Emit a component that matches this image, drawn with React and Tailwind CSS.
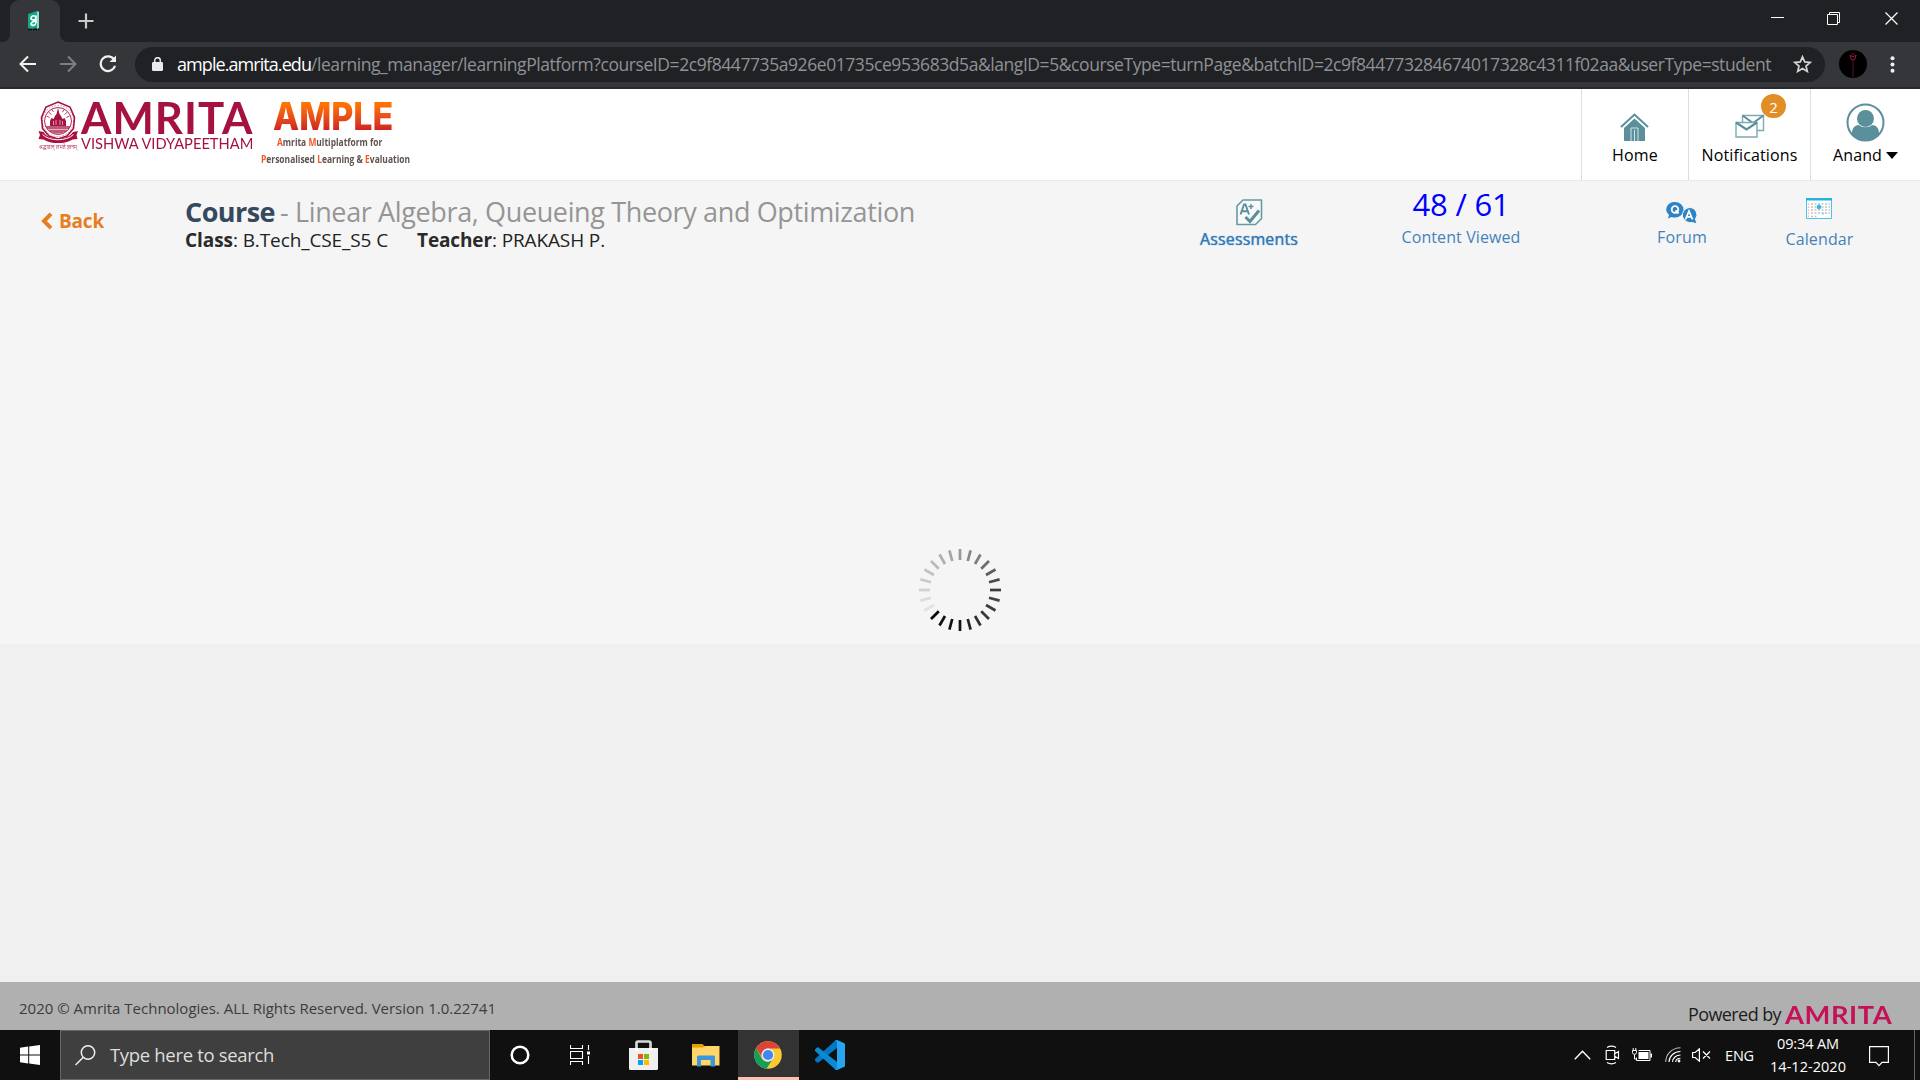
import React, { useLayoutEffect, useRef, useState } from "react";

// Single-line label whose letter spacing is computed so that it spans `w` pixels.
function Fit({ w, className = "", children }) {
  const ref = useRef(null);
  const [spacing, setSpacing] = useState(0);
  useLayoutEffect(() => {
    const el = ref.current;
    const n = el.textContent.length;
    setSpacing((w - el.getBoundingClientRect().width) / n);
  }, [w]);
  return (
    <span ref={ref} className={`block w-max shrink-0 whitespace-pre ${className}`} style={{ letterSpacing: `${spacing}px` }}>
      {children}
    </span>
  );
}

// Single-line label condensed or widened horizontally so that it spans `w` pixels.
function Stretch({ w, className = "", children }) {
  const ref = useRef(null);
  const [scale, setScale] = useState(1);
  useLayoutEffect(() => {
    setScale(w / ref.current.offsetWidth);
  }, [w]);
  return (
    <span ref={ref} className={`block w-max shrink-0 origin-left whitespace-pre ${className}`} style={{ transform: `scaleX(${scale})` }}>
      {children}
    </span>
  );
}

function TabStrip() {
  return (
    <div className="flex h-[42px] items-start bg-[#202124]">
      <div className="ml-[2px] flex h-[42px] items-end">
        <svg width="8" height="8" viewBox="0 0 8 8"><path d="M8 0v8H0a8 8 0 0 0 8-8z" fill="#35363a" /></svg>
      </div>
      <div className="flex h-[42px] w-[50px] items-center justify-center rounded-t-[9px] bg-[#35363a]">
        <svg className="-mt-px -ml-[2px]" width="14" height="20" viewBox="0 0 14 20">
          <path d="M1 3l9-3 2 1v16l-9 1-2-1z" fill="#10a98a" />
          <path d="M10 0l2 1v16l-2 1z" fill="#8fdccb" />
          <path d="M8.500 5.500c-2-1.500-4.500-.5-4.500 1.700 0 2 3 2.300 4.500.8M9 4.500v7c-.5 3.500-4 3.500-5 1.500 0-2 3-2.500 5-3.500" fill="none" stroke="#fff" strokeWidth="1.700" />
          <path d="M1 18.500h11" stroke="#111" strokeWidth="1.500" strokeDasharray="4 1" />
        </svg>
      </div>
      <svg width="8" height="42" viewBox="0 0 8 42"><path d="M0 34v8h8a8 8 0 0 1-8-8z" fill="#35363a" /></svg>
      <svg className="mt-[13px] ml-[10px]" width="16" height="16" viewBox="0 0 16 16"><path d="M8 .5v15M.5 8h15" stroke="#c9cacc" strokeWidth="2.200" /></svg>
      <svg className="mt-[11px] ml-auto" width="14" height="14" viewBox="0 0 14 14"><path d="M0 6.500h13" stroke="#fff" strokeWidth="1" /></svg>
      <svg className="mt-[11px] ml-[42px]" width="15" height="15" viewBox="0 0 15 15"><path d="M.5 3.500h10v10H.5zM2.500 3V1.500h10v10H11" fill="none" stroke="#fff" strokeWidth="1" /></svg>
      <svg className="mt-[12px] mr-[21px] ml-[43px]" width="14" height="14" viewBox="0 0 14 14"><path d="M.5.5l12 12M12.500.5l-12 12" stroke="#fff" strokeWidth="1.200" /></svg>
    </div>
  );
}

function Toolbar() {
  return (
    <div className="flex h-[47px] items-center border-b-2 border-[#28292c] bg-[#35363a] pb-px">
      <svg className="ml-[19px]" width="18" height="18" viewBox="0 0 18 18"><path d="M17 9H2M9 1.500L1.500 9 9 16.500" fill="none" stroke="#f1f1f2" strokeWidth="2" /></svg>
      <svg className="ml-[22px]" width="18" height="18" viewBox="0 0 18 18"><path d="M1 9h15M9 1.500L16.500 9 9 16.500" fill="none" stroke="#7d7e81" strokeWidth="2" /></svg>
      <svg className="ml-[22px]" width="18" height="18" viewBox="0 0 18 18">
        <path d="M15.300 5A7.300 7.300 0 1 0 16 10.800" fill="none" stroke="#f1f1f2" strokeWidth="2.200" />
        <path d="M17 .5v6.500h-6.500z" fill="#f1f1f2" />
      </svg>
      <div className="ml-[18px] flex h-[35px] w-[1690px] items-center rounded-full bg-[#202124]">
        <svg className="ml-[17px]" width="11" height="14" viewBox="0 0 11 14">
          <rect x="0" y="5" width="11" height="9" rx="1.200" fill="#e8eaed" />
          <path d="M2.700 6V3.500a2.800 2.800 0 0 1 5.600 0V6" fill="none" stroke="#e8eaed" strokeWidth="1.500" />
        </svg>
        <Fit w={134} className="ml-[14px] font-['Open_Sans',sans-serif] text-[18px] leading-[24px] text-white">ample.amrita.edu</Fit>
        <Fit w={1460} className="font-['Open_Sans',sans-serif] text-[17.5px] leading-[24px] text-[#8f9194]">
          /learning_manager/learningPlatform?courseID=2c9f8447735a926e01735ce953683d5a&amp;langID=5&amp;courseType=turnPage&amp;batchID=2c9f844773284674017328c4311f02aa&amp;userType=student
        </Fit>
        <svg className="ml-[22px]" width="19" height="18" viewBox="0 0 19 18"><path d="M9.500 1.800l2.200 5.100 5.500.5-4.200 3.600 1.300 5.400-4.800-2.900-4.800 2.900L6 11 1.800 7.400l5.500-.5z" fill="none" stroke="#d3d4d6" strokeWidth="1.700" /></svg>
      </div>
      <svg className="ml-[14px]" width="28" height="28" viewBox="0 0 28 28">
        <circle cx="14" cy="14" r="14" fill="#000" />
        <path d="M14 27V10" stroke="#3c0a24" strokeWidth="1.500" />
        <path d="M11 5l3 2 3-2M11 5l1 4 2 1 2-1 1-4M13 4h2" fill="none" stroke="#961a44" strokeWidth="1" />
      </svg>
      <svg className="ml-[23px]" width="5" height="17" viewBox="0 0 5 17"><g fill="#f1f1f2"><circle cx="2.500" cy="2.200" r="2" /><circle cx="2.500" cy="8.500" r="2" /><circle cx="2.500" cy="14.800" r="2" /></g></svg>
    </div>
  );
}

function Initial({ children }) {
  return <span className="text-[#f05a28]">{children}</span>;
}

function Emblem() {
  return (
    <svg width="42" height="43" viewBox="37 100 42 43">
      <g fill="none" stroke="#a5123f">
        <path d="M58 102l12 5 4.500 10.500-1 11-6.500 7.500-9 3-9-3-6.500-7.500-1-11 4.500-10.500z" strokeWidth="1.600" />
        <circle cx="58" cy="121" r="13.500" strokeWidth=".9" />
        <circle cx="58" cy="121" r="15.500" strokeWidth=".7" strokeDasharray="1.500 1.500" opacity=".7" />
        <path d="M46.500 116l3 1.500M48.500 112l3 2.500M51.500 109l2 3M67.500 112l-3 2.500M69.500 116l-3 1.500M64.500 109l-2 3" strokeWidth=".8" />
      </g>
      <path d="M50 126v-5l1.500-3 2 1 1.500-3 1.500-2L58 108l1.500 6 1.500 2 1.500 3 2-1 1.500 3v5z" fill="#a5123f" />
      <path d="M45.500 126h25c-2 5-7 7.500-12.500 7.500S47.500 131 45.500 126z" fill="#a5123f" opacity=".7" />
      <path d="M53.500 125v-4M56 125v-5M60 125v-5M62.500 125v-4M48 129.500h20" stroke="#f3d5dd" strokeWidth=".7" />
      <path d="M38.500 131l5 1c5 9 24 9 29.500 0l5-1-1.500 4 1 4-5 .5c-8 5-21 5-29 0l-5-.5 1.500-4z" fill="#a5123f" />
      <path d="M42.500 134.500c7 7 24 7 31 0" fill="none" stroke="#fff" strokeWidth="1" />
    </svg>
  );
}

function BrandLogo() {
  return (
    <div className="flex items-start">
      <div className="mt-[11px] ml-[37px] flex w-[43px] flex-col">
        <Emblem />
        <div className="ml-[2px] w-[38px]">
          <Stretch w={38} className="font-['Noto_Sans',sans-serif] text-[6px] leading-[8px] text-[#b5406a]">श्रद्धावान् लभते ज्ञानम्</Stretch>
        </div>
      </div>
      <div className="ml-px w-[172px] font-['Lato',sans-serif] text-[#a5123f]">
        <Stretch w={173} className="mt-[8px] text-[43px] leading-[42px] font-bold tracking-[1px]">AMRITA</Stretch>
        <Stretch w={172} className="-mt-[2px] text-[14.5px] leading-[14px]">VISHWA VIDYAPEETHAM</Stretch>
      </div>
      <div className="ml-[8px] flex w-[149px] flex-col font-['Open_Sans',sans-serif] text-[10.5px] leading-[14px] font-bold text-[#5e534e]">
        <Stretch w={120} className="mt-[7px] ml-[12px] bg-linear-to-b from-[#ff7300] from-20% to-[#cf1d20] to-85% bg-clip-text font-['Inter',sans-serif] text-[38.5px] leading-[41px] font-extrabold text-transparent">AMPLE</Stretch>
        <Stretch w={105} className="-mt-[2px] ml-[16px]"><Initial>A</Initial>mrita <Initial>M</Initial>ultiplatform for</Stretch>
        <Stretch w={149} className="mt-[3px]"><Initial>P</Initial>ersonalised <Initial>L</Initial>earning &amp; <Initial>E</Initial>valuation</Stretch>
      </div>
    </div>
  );
}

function Header() {
  return (
    <header className="flex h-[92px] items-start border-b border-[#ebebeb] bg-white font-['Open_Sans',sans-serif] text-[16px] leading-[20px] text-black">
      <BrandLogo />
      <div className="ml-auto flex h-[91px] w-[107px] flex-col items-center border-l border-[#ddd]">
        <svg className="mt-[24px] -ml-px" width="29" height="28" viewBox="0 0 29 28">
          <path d="M1 14L14.500 1.500 28 14" fill="none" stroke="#5a8f9c" strokeWidth="2" />
          <path d="M4 28V15L14.500 5.500 25 15v13z" fill="#5a8f9c" />
          <path d="M11 28V15h7v13M14.500 17v11" fill="none" stroke="#d5e4e7" strokeWidth="1" />
        </svg>
        <Fit w={46} className="mt-[4px]">Home</Fit>
      </div>
      <div className="relative flex h-[91px] w-[122px] flex-col items-center border-l border-[#ddd]">
        <svg className="mt-[25px]" width="30" height="24" viewBox="0 0 30 24">
          <g stroke="#7fa9b3" strokeWidth="1.400" fill="#fff">
            <path d="M7.500 1.500h21v15h-21z" />
            <path d="M7.500 1.500L18 9 28.500 1.500" fill="none" stroke="#5a8f9c" strokeWidth="2" />
            <path d="M1 8.500h21v14.500H1z" />
            <path d="M1 8.500l10.500 7L22 8.500" fill="none" stroke="#5a8f9c" strokeWidth="2.200" />
          </g>
        </svg>
        <Fit w={96} className="mt-[7px]">Notifications</Fit>
        <span className="absolute top-[5px] left-[72px] flex h-[24px] w-[25px] items-center justify-center rounded-full bg-[#e38d27] pt-[2px] text-[15px] text-white">2</span>
      </div>
      <div className="flex h-[91px] w-[110px] flex-col border-l border-[#ddd]">
        <svg className="mt-[14px] ml-[35px]" width="39" height="39" viewBox="0 0 39 39">
          <defs><clipPath id="face"><circle cx="19.500" cy="19.500" r="18" /></clipPath></defs>
          <circle cx="19.500" cy="19.500" r="18" fill="#fff" stroke="#5a8f9c" strokeWidth="2" />
          <g clipPath="url(#face)" fill="#5a8f9c"><path d="M6 39V30c0-5 3-8 7-8 3 3 10 3 13 0 4 0 7 3 7 8v9z" /><circle cx="19.500" cy="15.500" r="8.500" /></g>
        </svg>
        <div className="mt-[3px] ml-[22px] flex items-center">
          <Fit w={49}>Anand</Fit>
          <svg className="ml-[4px]" width="12" height="7" viewBox="0 0 12 7"><path d="M0 0h12L6 7z" /></svg>
        </div>
      </div>
    </header>
  );
}

function CourseBar() {
  return (
    <section className="flex items-start font-['Open_Sans',sans-serif] text-[16px] leading-[20px] text-[#4482bb]">
      <div className="mt-[28px] ml-[41px] flex w-[144px] items-center text-[#e67e22]">
        <svg width="12" height="18" viewBox="0 0 12 18"><path d="M10 1.800L3 9l7 7.200" fill="none" stroke="#e67e22" strokeWidth="4" /></svg>
        <Fit w={45} className="ml-[6px] text-[19px] leading-[24px] font-bold">Back</Fit>
      </div>
      <div className="mt-[15px] w-[1015px] text-[#2a2a2a]">
        <div className="flex text-[27px] leading-[32px]">
          <Fit w={90} className="font-bold text-[#34495e]">Course</Fit>
          <Fit w={635} className="ml-[5px] text-[#959595]">- Linear Algebra, Queueing Theory and Optimization</Fit>
        </div>
        <div className="flex text-[19px] leading-[24px]">
          <Fit w={48} className="font-bold">Class</Fit>
          <Fit w={155} className="text-[#222]">: B.Tech_CSE_S5 C</Fit>
          <Fit w={75} className="ml-[29px] font-bold">Teacher</Fit>
          <Fit w={113} className="text-[#222]">: PRAKASH P.</Fit>
        </div>
      </div>
      <div className="mt-[18px] flex w-[98px] flex-col items-center text-[#337ab7]">
        <svg width="27" height="27" viewBox="0 0 27 27">
          <path d="M7 1h18.500v18.500l-6 6H1V7z" fill="#f8fafa" stroke="#669aa5" strokeWidth="1.600" strokeLinejoin="round" />
          <path d="M4.500 15.500L8 5.500h1.500l3.500 10M6 12.300h5.500" fill="none" stroke="#5a8f9c" strokeWidth="1.900" />
          <path d="M12.500 7.500h5M15 5v5" stroke="#5a8f9c" strokeWidth="1.400" />
          <path d="M9.500 18l4.500 4.500 9-11" fill="none" stroke="#5a8f9c" strokeWidth="3" />
        </svg>
        <Fit w={98} className="mt-[3px] font-medium text-shadow-[0_0_1px_#337ab7]">Assessments</Fit>
      </div>
      <div className="mt-[5px] ml-[104px] flex w-[118px] flex-col items-center">
        <Fit w={97} className="text-[31px] leading-[36px] text-[#0000ff]">48 / 61</Fit>
        <Fit w={119} className="mt-[5px]">Content Viewed</Fit>
      </div>
      <div className="mt-[20px] ml-[137px] flex w-[50px] flex-col items-center">
        <svg width="32" height="24" viewBox="0 0 32 24">
          <path d="M9 1a8.300 7.500 0 0 1 0 15.500q-2 0-3.500-.5L2 17.500l1-3.500A8.300 7.500 0 0 1 9 1z" fill="#2d83c5" />
          <path d="M23 6.500a7.800 7.300 0 0 1 6.500 11.500l1.500 5-4.500-1.500a8 7.300 0 1 1-3.500-15z" fill="#2d83c5" stroke="#f5f5f5" strokeWidth="1" />
          <g fill="none" stroke="#fff" strokeWidth="1.800"><circle cx="9" cy="8.500" r="3.300" /><path d="M9.500 9.500l3 3M19.500 18.500l3.500-8.500 3.500 8.500M20.500 15.800h5" /></g>
        </svg>
        <Fit w={50} className="mt-[2px]">Forum</Fit>
      </div>
      <div className="mt-[17px] ml-[78px] flex w-[69px] flex-col items-center">
        <svg className="-ml-px" width="26" height="21" viewBox="0 0 26 21">
          <path d="M.5.5h25v20H.5z" fill="#fff" stroke="#4cc3e4" />
          <path d="M0 0h26v2.500H0z" fill="#25b4df" />
          <path d="M5 6h19M5 9h19M5 12h19M5 15h19M5 18.500h7" stroke="#c4c4c4" strokeWidth="1.500" strokeDasharray="2 1.500" />
          <path d="M2.500 5.500v14" stroke="#f2b3b3" strokeWidth="1.300" strokeDasharray="1.500 1.500" />
          <circle cx="13" cy="9" r="2.300" fill="#27bde8" />
          <circle cx="17" cy="15.500" r="1.300" fill="#9ddcf0" />
        </svg>
        <Fit w={68} className="mt-[10px]">Calendar</Fit>
      </div>
    </section>
  );
}

const TICKS = ["#999", "#888", "#7c7c7c", "#6c6c6c", "#5c5c5c", "#4c4c4c", "#3c3c3c", "#444", "#3c3c3c", "#383838", "#303030", "#222", "#111", "#111", "#111", "#0a0a0a", "#e2e2e2", "#dcdcdc", "#d2d2d2", "#cacaca", "#c2c2c2", "#bababa", "#b0b0b0", "#a4a4a4"];

function Spinner() {
  return (
    <svg className="mx-auto" width="84" height="84" viewBox="-42 -42 84 84">
      {TICKS.map((c, i) => (
        <path key={i} d="M0-41V-30" stroke={c} strokeWidth="2.700" transform={`rotate(${i * 15})`} />
      ))}
    </svg>
  );
}

function Footer() {
  return (
    <footer className="flex h-[48px] items-start bg-[#b0b0b0] font-['Open_Sans',sans-serif]">
      <Fit w={477} className="mt-[16px] ml-[19px] text-[15px] leading-[20px] text-[#3c3c3c]">2020 © Amrita Technologies. ALL Rights Reserved. Version 1.0.22741</Fit>
      <Fit w={93} className="mt-[20px] ml-auto text-[18px] leading-[24px] text-[#1c1c1c]">Powered by</Fit>
      <div className="mt-[21px] mr-[28px] ml-[4px] w-[107px]">
        <Stretch w={107} className="font-['Lato',sans-serif] text-[24.5px] leading-[24px] font-bold tracking-[.5px] text-[#c4125a]">AMRITA</Stretch>
      </div>
    </footer>
  );
}

function Taskbar() {
  return (
    <div className="flex h-[50px] items-center bg-[#101010] font-['Open_Sans',sans-serif]">
      <svg className="ml-[20px]" width="20" height="20" viewBox="0 0 20 20" fill="#fff"><path d="M0 2.800l8.200-1.200v7.900H0zM9.200 1.400L20 0v9.500H9.200zM0 10.500h8.200v7.900L0 17.200zM9.200 10.500H20V20L9.200 18.600z" /></svg>
      <div className="ml-[20px] flex h-[50px] w-[430px] items-center border border-[#666] bg-[#3f3f3f]">
        <svg className="ml-[14px]" width="21" height="21" viewBox="0 0 21 21"><circle cx="13" cy="7.500" r="6.700" fill="none" stroke="#f0f0f0" strokeWidth="1.500" /><path d="M8.300 12.300L.5 20" stroke="#f0f0f0" strokeWidth="1.500" /></svg>
        <Fit w={164} className="ml-[14px] text-[18.5px] leading-[24px] text-[#dedede]">Type here to search</Fit>
      </div>
      <svg className="ml-[20px]" width="20" height="20" viewBox="0 0 20 20"><circle cx="10" cy="10" r="8.300" fill="none" stroke="#fff" strokeWidth="2.500" /></svg>
      <svg className="ml-[40px]" width="20" height="20" viewBox="0 0 20 20"><path d="M.5 0v3.500h12V0M.5 20v-3.500h12V20M.5 6.500h12v7H.5zM18.500 0v5M18.500 11v8" fill="none" stroke="#fff" strokeWidth="1.100" /><path d="M17 6.500h3v3h-3z" fill="#fff" /></svg>
      <svg className="ml-[39px]" width="29" height="30" viewBox="0 0 29 30">
        <path d="M7.500 9V3q0-1.500 1.500-1.500h11q1.500 0 1.500 1.500v6" fill="none" stroke="#d8d8d8" strokeWidth="2.700" />
        <path d="M0 8h29v20.500q0 1.500-1.500 1.500h-26Q0 30 0 28.500z" fill="#f0f0f0" /><path d="M6 8h3v2.500H6zM20 8h3v2.500h-3z" fill="#fff" />
        <path d="M9 14h5v5H9z" fill="#f25022" /><path d="M15 14h5v5h-5z" fill="#7fba00" /><path d="M9 20h5v5H9z" fill="#00a4ef" /><path d="M15 20h5v5h-5z" fill="#ffb900" />
      </svg>
      <svg className="ml-[34px]" width="28" height="24" viewBox="0 0 28 24">
        <path d="M0 1h10.500L13 3.500V6H0z" fill="#e0a000" />
        <path d="M13 3h14.500v19.500H0V4.500h11z" fill="#ffd667" />
        <path d="M5 23.500V14q0-1.500 1.500-1.500h15q1.500 0 1.500 1.500v9.500h-4.500V17H9v6.500z" fill="#3a96dd" />
      </svg>
      <div className="ml-[18px] flex h-[50px] w-[61px] items-center border-b-[3px] border-[#fcc0b0] bg-[#333] pt-[3px] pl-[16px]">
        <svg width="28" height="28" viewBox="0 0 28 28">
          <circle cx="14" cy="14" r="13.800" fill="#fbc934" />
          <path d="M2 7a13.800 13.800 0 0 1 24 0.500H14a6.500 6.500 0 0 0-6 9z" fill="#db4437" />
          <path d="M2 7a13.800 13.800 0 0 0 10.500 20.700L19 17.500a6.500 6.500 0 0 1-11.200 0z" fill="#129f5c" />
          <circle cx="14" cy="14" r="6.400" fill="#e8f0fb" /><circle cx="14" cy="14" r="5.100" fill="#4285f4" />
        </svg>
      </div>
      <svg className="ml-[16px]" width="30" height="30" viewBox="0 0 30 30">
        <path d="M22 0v8L3.500 22.500Q2.500 23 1.500 22L0 20.500q-.5-1 .3-1.700L20 .8z" fill="#0078c4" />
        <path d="M22 30v-8L3.500 7.500Q2.500 7 1.500 8L0 9.500q-.5 1 .3 1.700L20 29.200z" fill="#0a8ad4" />
        <path d="M22 0l7 3q1 .5 1 1.500v21q0 1-1 1.500l-7 3q-1.200.2-2-.8 2 .5 2-1.700V2.500Q22 .3 20 .8q.8-1 2-.8z" fill="#27a5f0" />
      </svg>

      <svg className="ml-auto" width="17" height="10" viewBox="0 0 17 10"><path d="M.8 9.200l7.700-8 7.700 8" fill="none" stroke="#fff" strokeWidth="1.400" /></svg>
      <svg className="ml-[14px]" width="15" height="20" viewBox="0 0 15 20" fill="none" stroke="#fff" strokeWidth="1.200"><path d="M1.200 5.500h8.500v9H1.200zM9.700 8.800L13.500 6.500v7L9.700 11.200M2 2.500Q6.500-.2 11 2.500M2 17.500Q6.500 20.200 11 17.500" /></svg>
      <svg className="ml-[12px]" width="21" height="16" viewBox="0 0 21 16">
        <path d="M6.500 3.500h11.500v10H4.500v-3" fill="none" stroke="#fff" strokeWidth="1" /><path d="M6.500 5h10v7h-10z" fill="#fff" /><path d="M18.500 6.500h1.500v4h-1.500z" fill="#fff" />
        <path d="M1.200 1v2M3.800 1v2M.5 3.500h4v2q-.5 2-2 2t-2-2zM2.500 7.500v4.500h2" fill="none" stroke="#fff" strokeWidth="1" />
      </svg>
      <svg className="ml-[12px]" width="16" height="16" viewBox="0 0 16 16" fill="none" stroke="#fff" strokeWidth="1.100"><path d="M.7 15C1 7 7 1 15.500.8" opacity=".7" /><path d="M4 15c.3-6 5-10.500 11.500-10.500" /><path d="M7.500 15c.3-4 3.500-7 8-7" /><path d="M10.700 15c.2-2 2-3.700 4.800-3.700" /><circle cx="14" cy="14" r="1.400" fill="#fff" stroke="none" /></svg>
      <svg className="ml-[11px]" width="19" height="14" viewBox="0 0 19 14" fill="none" stroke="#fff" strokeWidth="1.200"><path d="M.6 4.500h2.600L7.400.8v12.400L3.200 9.500H.6zM11 3.500l7 7M18 3.500l-7 7" /></svg>
      <Fit w={29} className="mt-px ml-[14px] text-[14.5px] leading-[20px] text-white">ENG</Fit>
      <div className="ml-[16px] flex w-[76px] flex-col items-center text-[14.5px] leading-[23px] text-white">
        <Fit w={62}>09:34 AM</Fit>
        <Fit w={76}>14-12-2020</Fit>
      </div>
      <svg className="mt-[2px] ml-[23px]" width="20" height="21" viewBox="0 0 20 21"><path d="M.6.6h18.800v15.800H13L10 19.600 7 16.400H.6z" fill="none" stroke="#fff" strokeWidth="1.200" /></svg>
      <div className="mr-[5px] ml-[25px] h-[50px] w-px bg-[#666]" />
    </div>
  );
}

export default function App() {
  return (
    <div className="flex h-[1080px] w-[1920px] flex-col overflow-hidden bg-[#f0f0f0]">
      <TabStrip />
      <Toolbar />
      <Header />
      <main className="flex h-[463px] flex-col justify-between bg-[#f5f5f5] pb-[12px]">
        <CourseBar />
        <Spinner />
      </main>
      <div className="grow" />
      <Footer />
      <Taskbar />
    </div>
  );
}
